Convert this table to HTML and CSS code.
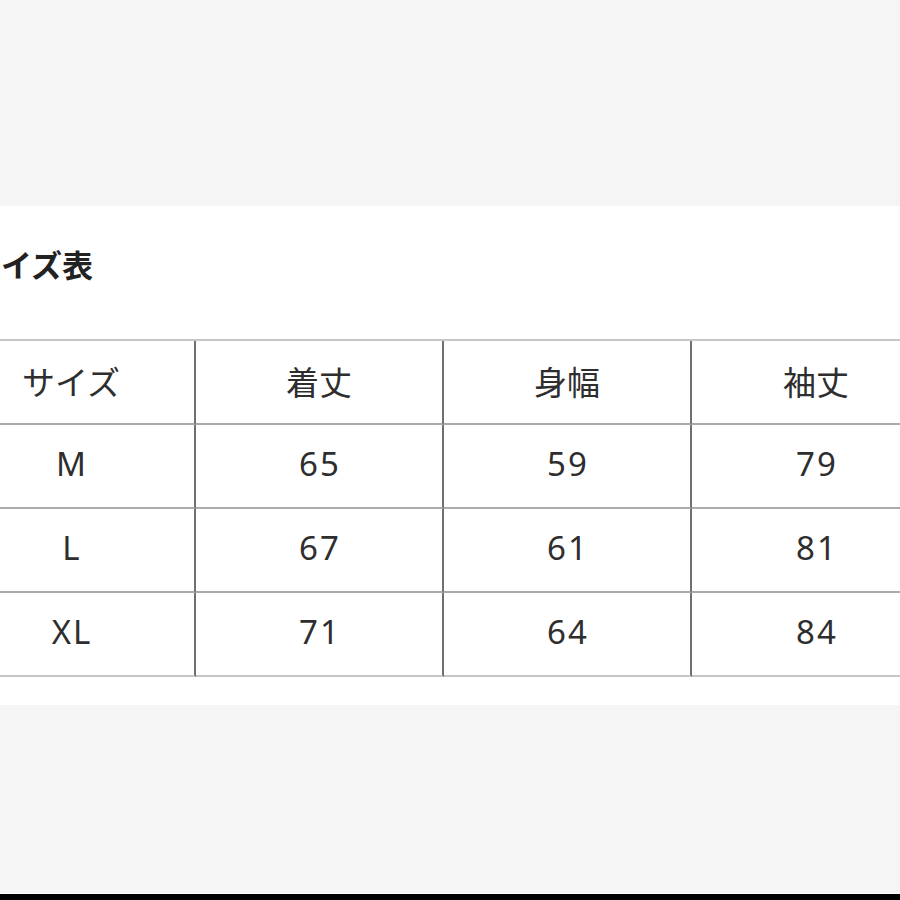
FILE: index.html
```html
<!DOCTYPE html>
<html lang="ja">
<head>
<meta charset="utf-8">
<link rel="stylesheet" href="styles.css">
</head>
<body>
<div class="top-space"></div>
<section class="panel">
  <h2 class="title">サイズ表</h2>
  <div class="grid">
    <div class="cell head">サイズ</div>
    <div class="cell head">着丈</div>
    <div class="cell head">身幅</div>
    <div class="cell head">袖丈</div>
    <div class="cell">M</div>
    <div class="cell">65</div>
    <div class="cell">59</div>
    <div class="cell">79</div>
    <div class="cell">L</div>
    <div class="cell">67</div>
    <div class="cell">61</div>
    <div class="cell">81</div>
    <div class="cell">XL</div>
    <div class="cell">71</div>
    <div class="cell">64</div>
    <div class="cell">84</div>
  </div>
</section>
<div class="bottom-space"></div>
<div class="bottom-bar"></div>
</body>
</html>
```

FILE: styles.css
```css
html, body {
  margin: 0;
  padding: 0;
}
body {
  width: 900px;
  height: 900px;
  overflow: hidden;
  background: #f5f5f5;
  font-family: "Noto Sans", "Noto Sans CJK JP", sans-serif;
  color: #2e2e2e;
}
.top-space {
  height: 206px;
}
.panel {
  background: #ffffff;
  margin-left: -52px;
  width: 1000px;
  height: 499px;
  box-sizing: border-box;
  padding-top: 39px;
}
.title {
  margin: 0 0 56px 22px;
  font-family: "Noto Sans CJK JP", sans-serif;
  font-weight: 700;
  font-size: 31px;
  line-height: 38px;
  color: #222;
}
.grid {
  display: grid;
  grid-template-columns: repeat(4, 248px);
  grid-auto-rows: 84px;
  border-top: 2px solid #c6c6c6;
}
.cell {
  box-sizing: border-box;
  border-right: 2px solid #707070;
  border-bottom: 2px solid #ababab;
  display: flex;
  align-items: center;
  justify-content: center;
  font-size: 33px;
  letter-spacing: 2px;
  padding-left: 2px;
  padding-bottom: 6px;
}
.cell.head {
  font-family: "Noto Sans CJK JP", sans-serif;
  font-size: 33px;
  letter-spacing: 0;
  padding-left: 0;
  padding-bottom: 3px;
}
.cell:nth-child(4n) {
  border-right: none;
}
.cell:nth-last-child(-n+4) {
  border-bottom-color: #c6c6c6;
}
.bottom-space {
  height: 188px;
  border-bottom: 1px solid #ffffff;
}
.bottom-bar {
  height: 6px;
  background: #000;
}
```
